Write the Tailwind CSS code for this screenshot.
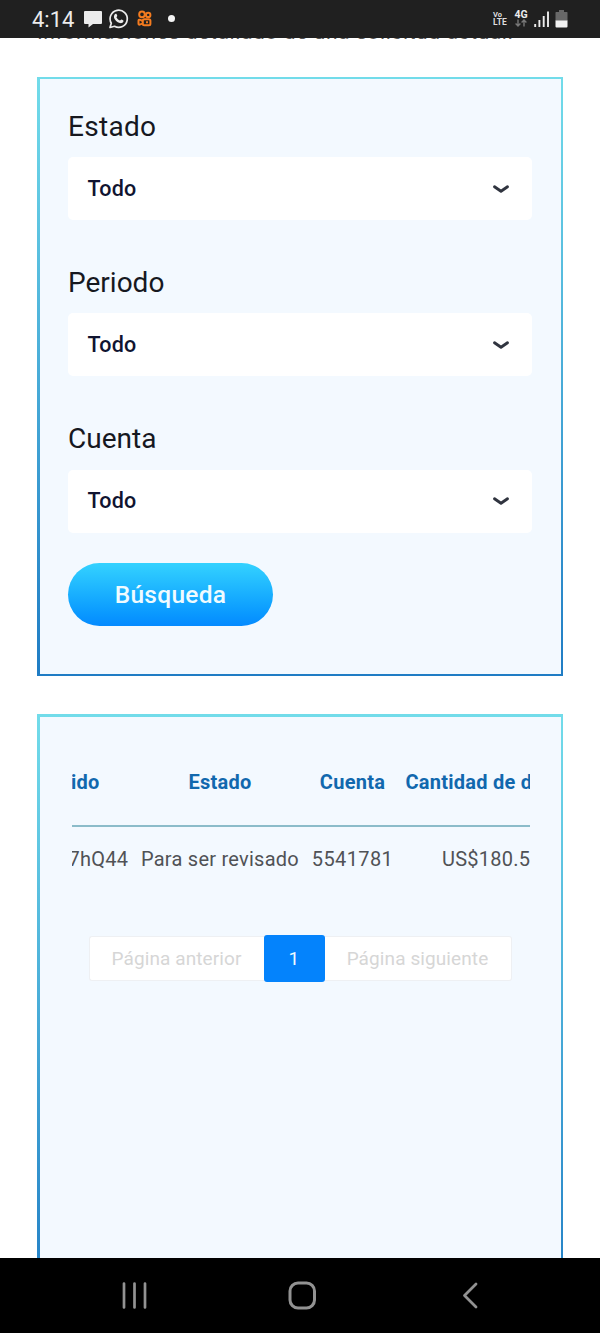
<!DOCTYPE html>
<html lang="es">
<head>
<meta charset="utf-8">
<title>Solicitudes</title>
<script src="https://cdn.jsdelivr.net/npm/@tailwindcss/browser@4"></script>
</head>
<body class="bg-white font-[Roboto,sans-serif]">
<div class="flex h-[1333px] w-[600px] flex-col overflow-hidden">
  <header class="z-10 flex h-[37.5px] shrink-0 items-center justify-between bg-[#202020] pr-[32px] pl-[32px] text-[#ececec]">
    <div class="flex items-center">
      <span class="w-[51px] pt-[2px] text-[22px] leading-none whitespace-nowrap">4:14</span>
      <svg class="h-[20px] w-[20px]" viewBox="0 0 20 20"><path d="M2 2H18Q19 2 19 3V14Q19 15 18 15H10L5.500 18.500V15H2Q1 15 1 14V3Q1 2 2 2Z" fill="#ececec"/></svg>
      <svg class="ml-[5px] h-[22px] w-[22px]" viewBox="0 0 22 22"><path d="M2 19.500L3.300 15.200A8.600 8.600 0 1 1 6.500 18.300Z" fill="none" stroke="#ececec" stroke-width="1.700" stroke-linejoin="round"/><path d="M7.600 5.800C8.300 5.500 8.700 6 9.200 7.500C9.500 8.300 8.600 8.800 8.400 9.200C9.200 10.800 10.300 11.800 12 12.600C12.500 12.300 12.900 11.300 13.400 11.500C15.600 12.500 15.700 12.600 15.400 13.500C14.900 14.900 13.300 15.500 11.800 15.100C8.900 14.300 6.900 12 6.100 9.900C5.600 8.200 6.500 6.300 7.600 5.800Z" fill="#ececec"/></svg>
      <svg class="ml-[7px] h-[17px] w-[16px]" viewBox="0 0 16 17" fill="none" stroke="#f47b1f" stroke-width="2"><circle cx="5" cy="4.400" r="2.800"/><circle cx="11.200" cy="4.900" r="2.200"/><rect x="5.800" y="9.200" width="7.600" height="6" rx="1.500"/><path d="M5.800 11L2.800 9.700Q1.500 9.400 1.500 10.700V13.500Q1.500 15 2.800 14.600L5.800 13.400M9 12.200H11"/></svg>
      <span class="ml-[15px] size-[7px] rounded-full bg-[#f4f4f4]"></span>
    </div>
    <div class="flex items-center">
      <div class="flex w-[15px] flex-col font-bold text-[#dddddd]"><span class="text-[7.500px] leading-[7px]">Vo</span><span class="text-[8.500px] leading-[8px]">LTE</span></div>
      <div class="ml-[6px] flex w-[14px] flex-col items-center"><span class="text-[10.500px] leading-[9px] font-bold">4G</span>
        <svg class="h-[8px] w-[12px]" viewBox="0 0 12 8" fill="none" stroke="#777" stroke-width="1.400"><path d="M3 .5V7M.6 4.600L3 7L5.400 4.600M9 7.500V1M6.600 3.400L9 1L11.400 3.400"/></svg></div>
      <svg class="ml-[6px] h-[18px] w-[16px]" viewBox="0 0 16 18"><path d="M1.200 14V17M5.400 10V17M9.700 6V17M14 1.500V17" stroke="#ececec" stroke-width="1.900"/></svg>
      <svg class="ml-[5px] h-[18px] w-[13px]" viewBox="0 0 13 18"><path d="M4 0H9V2H12Q12.500 2 12.500 3V11H.5V3Q.5 2 1 2H4Z" fill="#686868"/><path d="M.5 10.500H12.500V16.500Q12.500 17.500 11.500 17.500H1.500Q.5 17.500 .5 16.500Z" fill="#f2f2f2"/></svg>
    </div>
  </header>
  <main class="flex min-h-0 flex-1 flex-col overflow-hidden px-[37px]">
    <p class="-mt-[17px] h-[56px] shrink-0 text-[21px] leading-[22px] tracking-[0.6px] whitespace-nowrap text-[#555]">Informaciones detallado de una solicitud actual.</p>
    <section class="h-[599.500px] shrink-0 bg-linear-to-b from-[#72dcea] to-[#1f7cc4] p-[2.500px]">
      <form class="flex h-full flex-col bg-[#f3f9ff] px-[28.500px] pt-[28px]">
        <div class="h-[156.300px]">
          <label class="block h-[50px] pt-[1.500px] text-[28px] leading-[36px] tracking-[0.3px] text-[#16181f]">Estado</label>
          <div class="flex h-[63px] items-center justify-between rounded-[5px] bg-white pr-[22.500px] pl-[19.500px] text-[21.500px] font-medium tracking-[0.2px] text-[#101430]"><span class="pt-px">Todo</span><svg class="h-[12px] w-[18px]" viewBox="0 0 18 12"><path d="M2.500 3.800L9 8.300L15.500 3.800" fill="none" stroke="#30343f" stroke-width="2.900" stroke-linecap="round" stroke-linejoin="round"/></svg></div>
        </div>
        <div class="h-[156.300px]">
          <label class="block h-[50px] pt-[1.500px] text-[28px] leading-[36px] text-[#16181f]">Periodo</label>
          <div class="flex h-[63px] items-center justify-between rounded-[5px] bg-white pr-[22.500px] pl-[19.500px] text-[21.500px] font-medium tracking-[0.2px] text-[#101430]"><span class="pt-px">Todo</span><svg class="h-[12px] w-[18px]" viewBox="0 0 18 12"><path d="M2.500 3.800L9 8.300L15.500 3.800" fill="none" stroke="#30343f" stroke-width="2.900" stroke-linecap="round" stroke-linejoin="round"/></svg></div>
        </div>
        <div class="h-[143.500px]">
          <label class="block h-[50px] pt-[1.500px] text-[28px] leading-[36px] text-[#16181f]">Cuenta</label>
          <div class="flex h-[63px] items-center justify-between rounded-[5px] bg-white pr-[22.500px] pl-[19.500px] text-[21.500px] font-medium tracking-[0.2px] text-[#101430]"><span class="pt-px">Todo</span><svg class="h-[12px] w-[18px]" viewBox="0 0 18 12"><path d="M2.500 3.800L9 8.300L15.500 3.800" fill="none" stroke="#30343f" stroke-width="2.900" stroke-linecap="round" stroke-linejoin="round"/></svg></div>
        </div>
        <button type="button" class="h-[63px] w-[205px] rounded-full bg-linear-to-b from-[#34d2ff] to-[#058aff] pt-[2px] text-[24.500px] font-medium tracking-[0.3px] text-[#f0fbff]">Búsqueda</button>
      </form>
    </section>
    <section class="mt-[38px] h-[600px] shrink-0 bg-linear-to-b from-[#72dcea] to-[#1f7cc4] p-[2.500px]">
      <div class="flex h-full flex-col bg-[#f3f9ff] px-[32px] pt-[30px]">
        <div class="w-[458px] overflow-hidden whitespace-nowrap">
          <div class="grid h-[80px] w-[560px] grid-cols-[63px_171px_94px_232px] items-center border-b-2 border-[#8bbcca] pb-[7px] text-[20px] font-bold tracking-[0.25px] text-[#1168ae]"><span class="-ml-[0.5px]">ido</span><span class="text-center">Estado</span><span class="text-center">Cuenta</span><span class="pl-[6px]">Cantidad de dinero</span></div>
          <div class="grid h-[64px] w-[560px] grid-cols-[63px_171px_94px_232px] items-center text-[20px] tracking-[0.25px] text-[#505256]"><span class="-ml-[3px]">7hQ44</span><span class="text-center">Para ser revisado</span><span class="text-center tracking-[0.4px]">5541781</span><span class="pl-[42.500px]">US$180.5</span></div>
        </div>
        <nav class="mt-[45px] ml-[17px] flex h-[46px] w-[423px] items-center text-[19px] tracking-[0.1px] text-[#d6d6d6]">
          <span class="flex h-[45px] w-[175px] items-center justify-center rounded-l-[3px] border border-r-0 border-[#eef0f3] bg-white pt-px">Página anterior</span>
          <span class="flex h-[47px] w-[61px] shrink-0 items-center justify-center rounded-[3px] bg-[#0483fc] pt-px text-[#eefaff]">1</span>
          <span class="flex h-[45px] w-[187px] items-center justify-center rounded-r-[3px] border border-l-0 border-[#eef0f3] bg-white pt-px">Página siguiente</span>
        </nav>
      </div>
    </section>
  </main>
  <footer class="h-[75px] shrink-0 bg-black">
    <svg class="h-[75px] w-[600px]" viewBox="0 0 600 75" fill="none" stroke="#929292" stroke-linecap="round" stroke-linejoin="round"><path d="M124 25.500V49.500M134.500 25.500V49.500M145 25.500V49.500" stroke-width="2.700"/><rect x="290" y="25" width="24.500" height="25" rx="8" stroke-width="3"/><path d="M476 26L464.500 37.500L476 49" stroke-width="2.800"/></svg>
  </footer>
</div>
</body>
</html>
